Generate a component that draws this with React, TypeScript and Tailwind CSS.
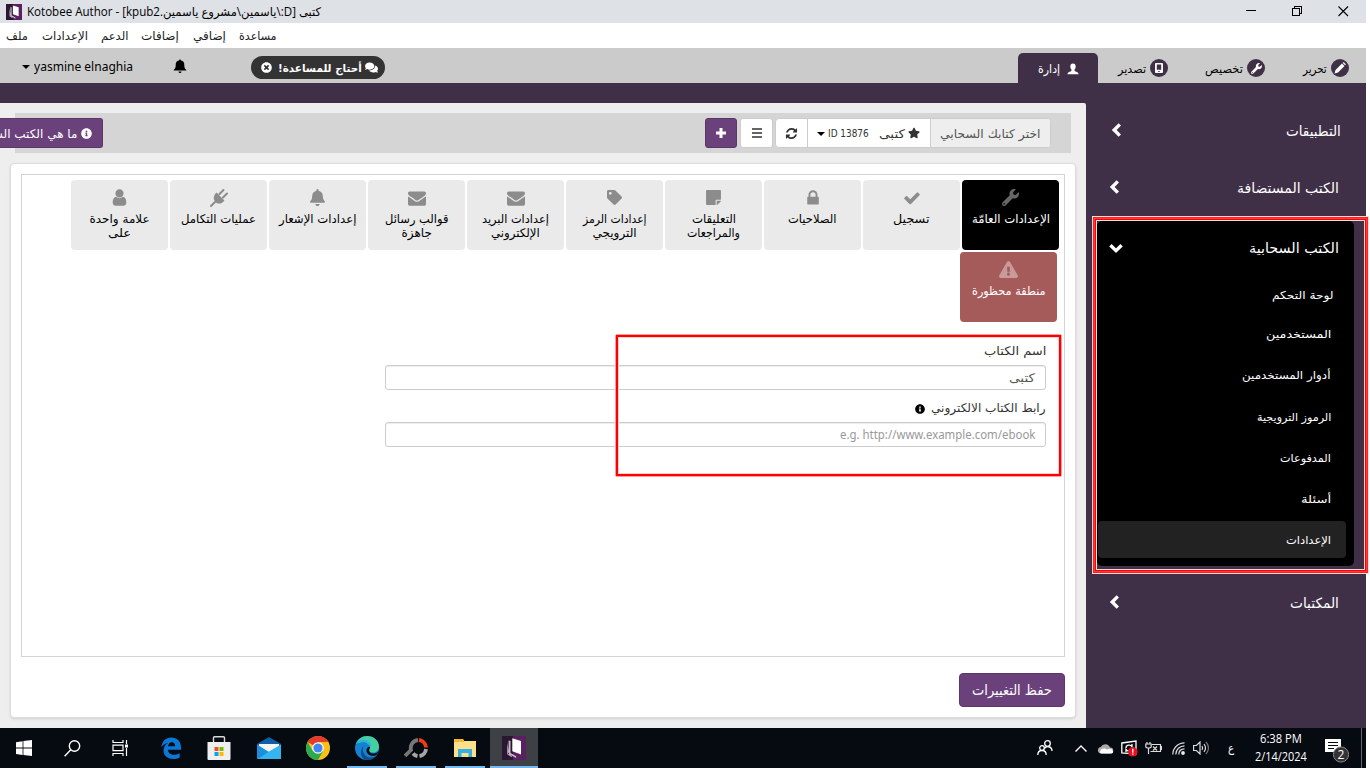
import { useLayoutEffect, useRef, useState, type ReactNode } from "react";
import {
  FaBell,
  FaComments,
  FaExclamationTriangle,
  FaInfoCircle,
  FaStar,
  FaStickyNote,
  FaTag,
  FaTimesCircle,
  FaWrench,
} from "react-icons/fa";

/* A single line of text that always fills the given width. */
function Line({ w, children, className = "", rtl = true }: { w: number; children: ReactNode; className?: string; rtl?: boolean }) {
  const ref = useRef<HTMLSpanElement>(null);
  const [k, setK] = useState(1);
  useLayoutEffect(() => {
    if (ref.current && ref.current.offsetWidth) setK(w / ref.current.offsetWidth);
  }, [w]);
  return (
    <span dir="ltr" className={"flex shrink-0 " + className} style={{ width: w }}>
      <span ref={ref} dir={rtl ? "rtl" : "ltr"} className="shrink-0 origin-left whitespace-nowrap" style={{ transform: `scaleX(${k})` }}>
        {children}
      </span>
    </span>
  );
}

function Glyph({ d, className }: { d: string; className: string }) {
  return (
    <svg viewBox="0 0 1792 1792" className={className} fill="currentColor">
      <path d={d} />
    </svg>
  );
}

const CHECK =
  "M1671 566q0 40-28 68l-724 724-136 136q-28 28-68 28t-68-28l-136-136-362-362q-28-28-28-68t28-68l136-136q28-28 68-28t68 28l294 295 656-657q28-28 68-28t68 28l136 136q28 28 28 68z";
const MAIL =
  "M1792 710v794q0 66-47 113t-113 47h-1472q-66 0-113-47t-47-113v-794q44 49 101 87 362 246 497 345 57 42 92.5 65.5t94.5 48 110 24.500h2q51 0 110-24.500t94.5-48 92.5-65.500q170-123 498-345 57-39 100-87zm0-294q0 79-49 151t-122 123q-376 261-468 325-10 7-42.500 31t-54 38.500-52 32.500-57.500 27-50 9h-2q-23 0-50-9t-57.500-27-52-32.500-54-38.500-42.500-31q-91-64-262-182.500t-205-142.500q-62-42-117-115.500t-55-136.500q0-78 41.500-130t118.500-52h1472q65 0 112.500 47t47.500 113z";
const USER =
  "M1536 1399q0 109-62.500 187t-150.500 78h-854q-88 0-150.500-78t-62.500-187q0-85 8.500-160.500t31.500-152 58.500-131 94-89 134.500-34.500q131 128 313 128t313-128q76 0 134.500 34.500t94 89 58.500 131 31.500 152 8.500 160.500zm-256-887q0 159-112.500 271.500t-271.500 112.500-271.500-112.500-112.500-271.500 112.500-271.500 271.500-112.500 271.500 112.500 112.500 271.500z";
const REFRESH =
  "M1639 1056q0 5-1 7-64 268-268 434.500t-478 166.500q-146 0-282.500-55t-243.500-157l-129 129q-19 19-45 19t-45-19-19-45v-448q0-26 19-45t45-19h448q26 0 45 19t19 45-19 45l-137 137q71 66 161 102t187 36q134 0 250-65t186-179q11-17 53-117 8-23 30-23h192q13 0 22.500 9.500t9.500 22.500zm25-800v448q0 26-19 45t-45 19h-448q-26 0-45-19t-19-45 19-45l138-138q-148-137-349-137-134 0-250 65t-186 179q-11 17-53 117-8 23-30 23h-199q-13 0-22.500-9.500t-9.500-22.500v-7q65-268 270-434.500t480-166.500q146 0 284 55.500t245 156.500l130-129q19-19 45-19t45 19 19 45z";
const LOCK =
  "M640 768h512v-192q0-106-75-181t-181-75-181 75-75 181v192zm832 96v576q0 40-28 68t-68 28h-960q-40 0-68-28t-28-68v-576q0-40 28-68t68-28h32v-192q0-184 132-316t316-132 316 132 132 316v192h32q40 0 68 28t28 68z";

function Plug() {
  return (
    <svg viewBox="0 0 18 18" className="size-[18px]" fill="none" stroke="currentColor">
      <path d="m9.500 5 4-4M13 8.500l4-4M5 13l-4 4" strokeWidth="2" strokeLinecap="round" />
      <path d="m6.600 3.600 7.800 7.800c-2.200 3.400-6.400 4.300-9 1.700s-2-7 1.200-9.500z" fill="currentColor" stroke="none" />
    </svg>
  );
}

function Chevron({ down = false }: { down?: boolean }) {
  return (
    <svg viewBox="0 0 14 14" className={down ? "size-3.5" : "-mt-[3px] ml-px size-3.5"} fill="none" stroke="#fff" strokeWidth="3.4">
      <path d={down ? "M1.4 4.2 7 9.600l5.600-5.400" : "M9.8 1.4 4.2 7l5.600 5.600"} />
    </svg>
  );
}

function Caret() {
  return (
    <svg viewBox="0 0 8 4" className="h-1 w-2">
      <path d="M0 0h8L4 4z" />
    </svg>
  );
}

function BookLogo({ className }: { className: string }) {
  return (
    <svg viewBox="0 0 24 24" className={className}>
      <rect width="24" height="24" fill="#5a2160" />
      <path d="M0 0h11v24H0z" fill="#2c1733" />
      <path d="M10.300 2.200 19 5v13.500l-8.700-3.300z" fill="#fff" />
      <path d="M8.500 5v12l5.700 3.200V22L6.600 18V4.500zM5.300 6.500v11.700l4.500 3v-1L7 18z" fill="#c9bccb" />
    </svg>
  );
}

function TitleBar() {
  return (
    <div className="flex h-[23px] items-center bg-[#dee1e6] pl-1.5 text-black">
      <BookLogo className="mr-[5px] size-4" />
      <Line w={294} className="font-['Open_Sans','DejaVu_Sans'] text-[12px]">
        {"كتبى [D:\\ياسمين\\مشروع ياسمين.kpub2] - Kotobee Author"}
      </Line>
      <svg viewBox="0 0 106 12" className="ml-[925px] h-3 w-[106px]" fill="none" stroke="#000" strokeWidth="1.1" shapeRendering="crispEdges">
        <path d="M0 4.500h10M46.500 2.500h7v7h-7zM48.500 2.500v-2h7v7h-2" />
        <path d="m92.500.5 9.500 9.500m0-9.500L92.500 10" shapeRendering="auto" />
      </svg>
    </div>
  );
}

function MenuBar() {
  return (
    <div className="flex h-[25px] items-center bg-white pl-[6px] text-[12px] text-[#222]">
      <Line w={22}>ملف</Line>
      <Line w={46} className="ml-[14px]">الإعدادات</Line>
      <Line w={27} className="ml-[13px]">الدعم</Line>
      <Line w={38} className="ml-[13px]">إضافات</Line>
      <Line w={33} className="ml-[14px]">إضافي</Line>
      <Line w={38} className="ml-[13px]">مساعدة</Line>
    </div>
  );
}

function Circle({ children }: { children: ReactNode }) {
  return <span className="ml-1 flex size-[18px] items-center justify-center rounded-full bg-[#3f3047] text-white">{children}</span>;
}

function TopBar() {
  return (
    <div className="flex h-[35px] items-center bg-[#cbcbcb] pl-[22px] text-[12px] text-black">
      <span className="mt-[2px]"><Caret /></span>
      <Line w={99} rtl={false} className="ml-1 mt-[2px] font-['Noto_Sans'] text-[13px]">yasmine elnaghia</Line>
      <svg viewBox="0 0 14 14" className="ml-[40px] mt-px size-3.5" fill="#000">
        <path d="M6 1.500a1 1 0 0 1 2 0C10.500 2 11.300 3.500 11.300 6c0 2.500.5 3.500 2 5v.6H.7V11c1.500-1.500 2-2.500 2-5 0-2.500.8-4 3.300-4.500zM5.500 12.400h3a1.500 1.500 0 0 1-3 0z" />
      </svg>
      <div className="ml-[64px] mt-1 flex h-[23px] w-[134px] items-center rounded-full bg-[#333] pl-[10px] text-white">
        <FaTimesCircle className="size-[11px]" />
        <Line w={84} className="ml-[6px] mt-[3px] text-[11px] font-bold">أحتاج للمساعدة!</Line>
        <FaComments className="ml-[3px] size-[13px]" />
      </div>
      <div className="ml-[633px] flex h-[30px] w-20 items-center self-end rounded-t-[5px] bg-[#3f3047] pl-5 pt-px text-white">
        <Line w={22}>إدارة</Line>
        <svg viewBox="0 0 12 12" className="ml-[7px] size-3" fill="#fff">
          <path d="M6 .6c1.700 0 2.700 1.200 2.700 2.900 0 1.400-.7 2.600-1.300 3.200 0 .9.300 1.300 1.300 1.700 1.700.7 2.700 1 2.900 2.900H.4c.2-1.900 1.200-2.200 2.900-2.900 1-.4 1.300-.8 1.300-1.700-.6-.6-1.300-1.800-1.300-3.200C3.300 1.800 4.300.6 6 .6z" />
        </svg>
      </div>
      <div className="mt-[5px] flex items-center">
        <Line w={28} className="ml-[20px] mt-[2px]">تصدير</Line>
        <Circle>
          <svg viewBox="0 0 8 10" className="h-2.5 w-2">
            <path fillRule="evenodd" d="M1 0h6q1 0 1 1v8q0 1-1 1H1Q0 10 0 9V1q0-1 1-1zm.8 1.500v5.300h4.400V1.500zM3.300 8v1h1.400V8z" fill="#fff" />
          </svg>
        </Circle>
        <Line w={38} className="ml-[37px] mt-[2px]">تخصيص</Line>
        <Circle><FaWrench className="size-[11px]" /></Circle>
        <Line w={24} className="ml-[38px] mt-[2px]">تحرير</Line>
        <Circle>
          <svg viewBox="0 0 12 12" className="size-3" fill="#fff">
            <path d="m.5 11.500 1-3.500L8 1.500l2.500 2.500L4 10.500zM8.700.9l.4-.4q.5-.4 1 0l1.400 1.400q.4.500 0 1l-.4.400z" />
          </svg>
        </Circle>
      </div>
    </div>
  );
}

function BookBar() {
  return (
    <div className="mx-[15px] flex h-10 items-center bg-[#d5d5d5]">
      <div className="-ml-[15px] flex h-[30px] w-[103px] items-center justify-end overflow-hidden rounded-r-[3px] border-y border-r border-[#5b3769] bg-[#6b417b] pr-[10px] text-[12px] text-white">
        <Line w={109} className="mt-px">ما هي الكتب السحابية</Line>
        <FaInfoCircle className="ml-1 size-[11px] shrink-0" />
      </div>
      <div className="ml-[602px] flex h-[30px] w-8 items-center justify-center rounded-[3px] border border-[#5b3769] bg-[#6b417b] text-white">
        <svg viewBox="0 0 10 10" className="size-2.5">
          <path d="M0 5h10M5 0v10" stroke="#fff" strokeWidth="3" />
        </svg>
      </div>
      <div className="ml-[3px] flex h-[30px] w-[33px] items-center justify-center rounded-[3px] border border-[#ccc] bg-white">
        <svg viewBox="0 0 10 10" className="size-2.5">
          <path d="M0 1h10M0 5h10M0 9h10" stroke="#333" strokeWidth="1.700" />
        </svg>
      </div>
      <div className="ml-[2px] flex h-[30px] w-[276px] overflow-hidden rounded-[4px] border border-[#ccc] bg-white text-[12px] text-[#333]">
        <div className="flex w-8 items-center justify-center border-r border-[#ccc]">
          <Glyph d={REFRESH} className="size-[13px]" />
        </div>
        <div className="flex w-[123px] items-center border-r border-[#ccc] pl-[9px]">
          <span className="mt-px"><Caret /></span>
          <Line w={41} rtl={false} className="ml-[3px] mt-px font-['DejaVu_Sans'] text-[10px]">ID 13876</Line>
          <Line w={26} className="ml-[10px] mt-px">كتبى</Line>
          <FaStar className="ml-[3px] size-3" />
        </div>
        <div className="flex flex-1 items-center bg-[#eee] pl-[9px] pt-px text-[#555]">
          <Line w={101}>اختر كتابك السحابي</Line>
        </div>
      </div>
    </div>
  );
}

type Tile = { icon: ReactNode; lines: [string, number][]; tone?: string };

const TILES: Tile[] = [
  { icon: <FaWrench className="size-[17px]" />, lines: [["الإعدادات العامّة", 78]], tone: "bg-black text-white [&_svg]:text-[#666]" },
  { icon: <Glyph d={CHECK} className="size-[18px]" />, lines: [["تسجيل", 37]] },
  { icon: <Glyph d={LOCK} className="size-[18px]" />, lines: [["الصلاحيات", 49]] },
  { icon: <FaStickyNote className="size-[17px]" />, lines: [["التعليقات", 44], ["والمراجعات", 53]] },
  { icon: <FaTag className="size-[15px]" />, lines: [["إعدادات الرمز", 64], ["الترويجي", 44]] },
  { icon: <Glyph d={MAIL} className="size-[18px]" />, lines: [["إعدادات البريد", 67], ["الإلكتروني", 49]] },
  { icon: <Glyph d={MAIL} className="size-[18px]" />, lines: [["قوالب رسائل", 63], ["جاهزة", 30]] },
  { icon: <FaBell className="size-[17px]" />, lines: [["إعدادات الإشعار", 77]] },
  { icon: <Plug />, lines: [["عمليات التكامل", 75]] },
  { icon: <Glyph d={USER} className="size-[19px]" />, lines: [["علامة واحدة", 60], ["على", 23]] },
];

function TileBox({ tile }: { tile: Tile }) {
  return (
    <div className={"flex h-[70px] w-[97px] flex-col items-center rounded-[4px] pt-[9px] text-[12px] " + (tile.tone ?? "bg-[#eaeaea] text-black [&_svg]:text-[#8c8c8c]")}>
      <div className="flex h-[17px] items-center">{tile.icon}</div>
      <div className="mt-[6px] flex flex-col items-center leading-[14px]">
        {tile.lines.map(([t, w]) => (
          <Line key={t} w={w}>{t}</Line>
        ))}
      </div>
    </div>
  );
}

function Settings() {
  return (
    <div className="mx-[10px] mt-[10px] h-[555px] rounded-[4px] border border-[#ddd] bg-white p-[10px] shadow-sm">
      <div className="relative h-[483px] border border-[#d4d4d4] pt-[5px]">
        <div className="flex flex-row-reverse gap-[2px] pr-[5px]">
          {TILES.map((t, i) => (
            <TileBox key={i} tile={t} />
          ))}
        </div>
        <div className="mt-[2px] flex justify-end pr-[7px]">
          <TileBox
            tile={{
              icon: <FaExclamationTriangle className="size-[19px]" />,
              lines: [["منطقة محظورة", 74]],
              tone: "bg-[#a65b5b] text-white [&_svg]:text-[#c99a9a]",
            }}
          />
        </div>
        <div className="mt-[20px] flex flex-col items-end pr-[18px] text-[12px] text-[#333]">
          <div className="flex h-[23px] items-start"><Line w={62}>اسم الكتاب</Line></div>
          <div className="flex h-[25px] w-[661px] items-center justify-end rounded-[3px] border border-[#ccc] bg-white pr-[10px] text-[#555] shadow-[inset_0_1px_1px_rgba(0,0,0,0.075)]">
            <Line w={26}>كتبى</Line>
          </div>
          <div className="flex h-8 items-center pt-[3px]">
            <FaInfoCircle className="mt-[3px] size-[10px] text-black" />
            <Line w={115} className="ml-[6px]">رابط الكتاب الالكتروني</Line>
          </div>
          <div className="flex h-[25px] w-[661px] items-center justify-end rounded-[3px] border border-[#ccc] bg-white pr-[10px] text-[#999] shadow-[inset_0_1px_1px_rgba(0,0,0,0.075)]">
            <Line w={195} rtl={false} className="font-['Noto_Sans']">e.g. http://www.example.com/ebook</Line>
          </div>
        </div>
        <div className="absolute left-[593px] top-[159px] h-[143px] w-[447px] rounded-[2px] border border-[#ff9c9c]">
          <div className="h-full border-2 border-[#ff0000]">
            <div className="h-full border border-[#ffd0d0]" />
          </div>
        </div>
      </div>
      <div className="mt-4 flex justify-end">
        <div className="flex h-[34px] w-[106px] items-center justify-center rounded-[4px] border border-[#5b3769] bg-[#6b417b] text-[14px] text-white">
          <Line w={80}>حفظ التغييرات</Line>
        </div>
      </div>
    </div>
  );
}

function SideHead({ label, w, down, className }: { label: string; w: number; down?: boolean; className: string }) {
  return (
    <div className={"flex items-center justify-between text-[14px] text-white " + className}>
      <Chevron down={down} />
      <Line w={w}>{label}</Line>
    </div>
  );
}

const ITEMS: [string, number, string][] = [
  ["لوحة التحكم", 61, "h-[38px] pr-[13px] pt-[5px]"],
  ["المستخدمين", 65, "h-[41px] pr-[15px] pt-[3px]"],
  ["أدوار المستخدمين", 89, "h-[41px] pr-[15px] pt-[3px]"],
  ["الرموز الترويجية", 74, "h-[42px] pr-[15px] pt-[5px]"],
  ["المدفوعات", 51, "h-[40px] pr-[15px] pt-[5px]"],
  ["أسئلة", 30, "h-[41px] pr-[15px] pt-[5px]"],
  ["الإعدادات", 45, "h-[37px] pr-[15px] pt-[3px] mt-[3px] bg-[#222]"],
];

function Sidebar() {
  return (
    <div className="w-[280px] pt-5">
      <SideHead label="التطبيقات" w={55} className="h-[56px] pl-[23px] pr-[25px]" />
      <SideHead label="الكتب المستضافة" w={102} className="h-[58px] pl-[21px] pr-[27px]" />
      <div className="relative ml-[11px] mt-[4px] h-[345px] w-[257px] rounded-[5px] bg-black">
        <SideHead label="الكتب السحابية" w={90} down className="h-[54px] pl-3 pr-[15px]" />
        <div className="mr-2 flex flex-col text-[11px] text-white">
          {ITEMS.map(([t, w, c]) => (
            <div key={t} className={"ml-px flex items-center justify-end rounded-[4px] " + c}>
              <Line w={w}>{t}</Line>
            </div>
          ))}
        </div>
        <div className="absolute -left-[5px] -top-[5px] h-[358px] w-[277px] border border-[#ffdcdc]">
          <div className="h-full border border-[#ff2020]">
            <div className="h-full border border-[#ff3c3c]">
              <div className="h-full border border-[#ff0000]">
                <div className="h-full border border-[#ffdcdc]" />
              </div>
            </div>
          </div>
        </div>
      </div>
      <SideHead label="المكتبات" w={49} className="mt-[9px] h-[57px] pl-[21px] pr-[27px]" />
    </div>
  );
}

function Running({ children, active }: { children: ReactNode; active?: boolean }) {
  return (
    <div className={"flex h-10 items-center justify-center border-b-2 border-[#76b9ed] pt-[2px] " + (active ? "w-12 bg-[#3d4045]" : "w-10")}>
      {children}
    </div>
  );
}

function Taskbar() {
  return (
    <div className="flex h-10 w-[1366px] items-center bg-[#060a11] text-white">
      <svg viewBox="0 0 16 16" className="ml-4 size-4" fill="#fff">
        <path d="M0 2.200 6.600 1.200v6.400H0zM7.400 1.100 16 0v7.600H7.400zM0 8.400h6.600v6.500L0 14zM7.400 8.400H16V16l-8.600-1.100z" />
      </svg>
      <svg viewBox="0 0 17 17" className="ml-8 size-[17px]" fill="none" stroke="#fff" strokeWidth="1.400">
        <circle cx="10.500" cy="6" r="5.200" /><path d="M6.800 9.800.6 16.200" />
      </svg>
      <svg viewBox="0 0 17 16" className="ml-[31px] h-4 w-[17px]" fill="none" stroke="#fff" strokeWidth="1.200">
        <path d="M1 0v2.500h10V0M1 5.200h10v5.500H1zM1 16v-2.500h10V16M14.500 0v4M14.500 8v8" /><path d="M13 4.500h3v3h-3z" fill="#fff" stroke="none" />
      </svg>
      <svg viewBox="0 0 20 22" className="ml-[32px] h-[22px] w-5">
        <path d="M.2 10.500C1 4 5 .5 10.300.5 16.500.5 20 4.800 20 10.300v2.500H7c.2 3.600 3 5 6 5 2.300 0 4.300-.6 5.700-1.500v4.200c-1.800 1-4.200 1.500-6.600 1.500-6 0-9.600-3.600-9.600-8.500 0-3.300 1.700-6 4.500-7.500C4 6.500 1.700 8 .2 10.500zM7 9.200h7.200c0-2.300-1.100-4-3.400-4S7.400 7 7 9.200z" fill="#0a78d7" fillRule="evenodd" />
      </svg>
      <svg viewBox="0 0 24 24" className="ml-[26px] size-6">
        <path d="M6.500 7V1.800q0-1 1-1h9q1 0 1 1V7" fill="none" stroke="#d9d9d9" strokeWidth="1.400" />
        <path d="M.5 6h23v17q0 1-1 1h-21q-1 0-1-1z" fill="#efefef" />
        <path d="M7.500 11h4v4h-4z" fill="#f25022" /><path d="M12.500 11h4v4h-4z" fill="#7fba00" />
        <path d="M7.500 16h4v4h-4z" fill="#00a4ef" /><path d="M12.500 16h4v4h-4z" fill="#ffb900" />
      </svg>
      <svg viewBox="0 0 24 22" className="ml-[26px] h-[22px] w-6">
        <path d="M0 7 12 0l12 7v4H0z" fill="#0f5ea8" /><path d="M2 7h20v8H2z" fill="#f4f4f4" />
        <path d="M0 7.500 12 15l-9 7H0z" fill="#1a8fe0" /><path d="M24 7.500 12 14.500 1 22h23z" fill="#35b5f0" />
      </svg>
      <svg viewBox="0 0 24 24" className="ml-[25px] size-6">
        <circle cx="12" cy="12" r="12" fill="#fbc116" />
        <path d="M12 12 1.600 6A12 12 0 0 1 22.400 6H12z" fill="#e33b2e" />
        <path d="M1.600 6A12 12 0 0 0 12 24l5.200-9L12 12 6.800 15z" fill="#2da94f" />
        <circle cx="12" cy="12" r="5.800" fill="#fff" /><circle cx="12" cy="12" r="4.600" fill="#4285f4" />
      </svg>
      <div className="ml-[17px] flex">
        <Running>
          <svg viewBox="0 0 24 24" className="size-6">
            <circle cx="12" cy="12" r="12" fill="#1383cf" />
            <path d="M1 8C3 3 7 0 12 0c7 0 12 5 12 10.500 0 4-3 6-6 6-2.500 0-4.200-.8-4.200-2 0-.8 1.200-1.200 1.200-3.200C15 8 11.500 6 8 6 5 6 2.500 7 1 8z" fill="#45cfa0" />
            <path d="M1 8c2-4 7-5.500 10-4 4 1.500 6 4 4.500 7.500C14.500 8 11 6 8 6 5 6 2.500 7 1 8z" fill="#2bb4dd" />
            <path d="M9.500 9C7 11 7 17 11 20c3 2.300 8 2 11-1-2 3.500-6 5-10 5C5 23.500 4 13 9.500 9z" fill="#124b8c" />
            <path d="M15 12c-2 3 0 6 4 5.500 2-.2 3.500-1 4.400-2.500-.5 2-1.500 3.500-2.500 4.200-4 1.500-9-.2-9.400-4.200-.2-2.600 1.500-4.500 3-4.300z" fill="#060a11" />
          </svg>
        </Running>
        <div className="ml-[9px]">
          <Running>
            <svg viewBox="0 0 24 22" className="h-[22px] w-6" fill="none" strokeWidth="3.800">
              <path d="M14 3a8 8 0 0 0-7 10L1 19" stroke="#777" />
              <path d="M15 3a8 8 0 0 1 7 7.500" stroke="#f83a12" /><path d="M22 12a8 8 0 0 1-6.500 7.200M13.500 19.200A8 8 0 0 1 9 16.500" stroke="#a6a6a6" />
            </svg>
          </Running>
        </div>
        <div className="ml-[9px]">
          <Running>
            <svg viewBox="0 0 22 20" className="h-5 w-[22px]">
              <path d="M0 1h9l1 2h12v16H0z" fill="#ffe08a" /><path d="M0 1h9l1 2v1H0z" fill="#f5b82e" />
              <path d="M4 11h14v8h-3.500v-4h-7v4H4z" fill="#35aee4" />
            </svg>
          </Running>
        </div>
        <div className="ml-[5px]"><Running active><BookLogo className="size-6" /></Running></div>
      </div>
      <svg viewBox="0 0 16 16" className="ml-[499px] size-4" fill="none" stroke="#fff" strokeWidth="1.300">
        <circle cx="10.500" cy="3.500" r="2.800" /><circle cx="5" cy="8" r="2.300" /><path d="M.8 15c0-6 8.400-6 8.400 0M7.500 8.500C9 5.500 15 6 15 11" />
      </svg>
      <svg viewBox="0 0 12 7" className="ml-[22px] h-[7px] w-3" fill="none" stroke="#fff" strokeWidth="1.400"><path d="m.5 6.500 5.500-5.500 5.500 5.500" /></svg>
      <svg viewBox="0 0 17 11" className="ml-[10px] h-[11px] w-[17px]">
        <path d="M3.500 10.500a3.300 3.300 0 0 1 .3-6.500A5 5 0 0 1 13 4.500a3 3 0 0 1 .5 6z" fill="#aaa" />
        <path d="M4 10.500a3 3 0 0 1 0-4q3-2 6 0 4-2 6 1.500.5 2.500-2 2.500z" fill="#fff" />
      </svg>
      <svg viewBox="0 0 17 17" className="ml-[7px] size-[17px]" fill="none" stroke="#fff" strokeWidth="1.300">
        <path d="M.8 3 15 1v13L.8 13z" /><path d="M5 8c0-3 4-4 6-1.500V4M11 8c0 3-4 4-6 1.500V12" />
        <circle cx="11.800" cy="11.800" r="4.800" fill="#e81123" stroke="none" /><path d="M11.800 8.700v4M11.800 13.500v1.300" />
      </svg>
      <svg viewBox="0 0 17 12" className="ml-[7px] h-3 w-[17px]" fill="none" stroke="#ddd" strokeWidth="1.200">
        <path d="M2 0v2M5 0v2M.8 2h5.400v2.500q0 1.500-2.700 1.500T.8 4.500zM3.500 6v6M7 2.500h8.500v7h-10M15.500 4.500h1.200v3h-1.200M8 4.500l4 4m0-4-4 4" />
      </svg>
      <svg viewBox="0 0 13 13" className="ml-[10px] size-[13px]" fill="none" stroke="#ddd" strokeWidth="1.200">
        <path d="M.8 12.500C.8 6 6 .8 12.500.8M3.800 12.500c0-5 4-8.700 8.700-8.700M6.800 12.500c0-3.400 2.300-5.700 5.700-5.700" /><circle cx="11" cy="11" r="1.300" fill="#fff" />
      </svg>
      <svg viewBox="0 0 17 14" className="ml-2 h-3.5 w-[17px]" fill="none" stroke="#ddd" strokeWidth="1.200">
        <path d="M.6 4.500h2.800L7 1v12L3.400 9.500H.6z" /><path d="M9 5q1.300 2 0 4M11 3q3 4 0 8" /><path d="M13 1q5 6 0 12" stroke="#777" />
      </svg>
      <Line w={6} className="ml-[18px] text-[12px]">ع</Line>
      <div className="ml-[21px] flex w-[52px] flex-col items-center font-['Open_Sans'] text-[12px] leading-[18px]">
        <Line w={42} rtl={false}>6:38 PM</Line>
        <Line w={52} rtl={false}>2/14/2024</Line>
      </div>
      <svg viewBox="0 0 24 24" className="ml-[18px] mt-1.5 size-6">
        <path d="M0 0h16v13h-4v3l-3-3H0z" fill="#fff" /><path d="M3 3.500h10M3 6.500h10M3 9.500h6" stroke="#060a11" strokeWidth="1.200" />
        <circle cx="16" cy="15.500" r="7.600" fill="#333" stroke="#888" />
        <text x="16" y="19.800" fontSize="12" fill="#fff" textAnchor="middle" fontFamily="Open Sans">2</text>
      </svg>
      <div className="ml-[12px] h-10 w-px bg-[#666]" />
    </div>
  );
}

export default function App() {
  return (
    <div className="h-[768px] w-[1370px] overflow-hidden bg-white font-['DejaVu_Sans',sans-serif]">
      <div className="w-[1366px]">
        <TitleBar />
        <MenuBar />
        <TopBar />
        <div className="flex h-[645px] bg-[#3f3047]">
          <div className="mt-5 h-[625px] w-[1086px] rounded-tr-[2px] bg-[#eee] pt-[10px]">
            <BookBar />
            <Settings />
          </div>
          <Sidebar />
        </div>
        <Taskbar />
      </div>
    </div>
  );
}
